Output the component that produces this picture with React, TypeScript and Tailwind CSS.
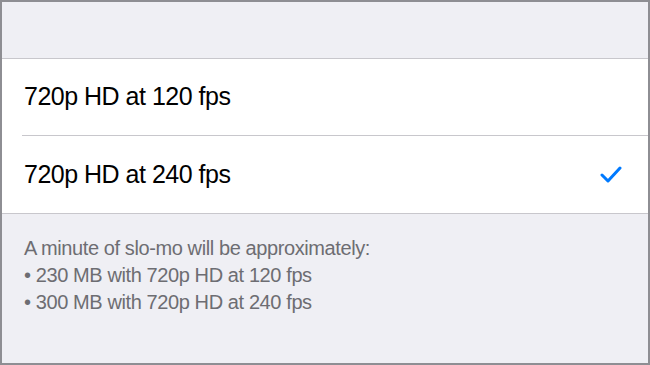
import React from 'react';

export default function App() {
  const options = [
    { label: '720p HD at 120 fps', selected: false },
    { label: '720p HD at 240 fps', selected: true },
  ];

  return (
    <div className="w-[650px] h-[365px] border-2 border-[#8e8e93] bg-[#efeff4] flex flex-col font-['Liberation_Sans',Arial,sans-serif] overflow-hidden">
      {/* Top spacer */}
      <div className="h-[56px] shrink-0"></div>

      {/* Options list */}
      <div className="bg-white border-y border-[#c8c7cc] flex flex-col">
        {options.map((opt, idx) => (
          <div key={idx} className="flex flex-col">
            {idx > 0 && <div className="ml-[20px] h-px bg-[#c8c7cc]"></div>}
            <div
              className={`${idx === 0 ? 'h-[76px]' : 'h-[77px]'} pl-[22px] pr-[26px] flex items-center justify-between`}
            >
              <span className="text-[25px] text-black tracking-[-0.5px]">{opt.label}</span>
              {opt.selected && (
                <svg width="22" height="17" viewBox="0 0 22 17" fill="none">
                  <polyline
                    points="2,9 8,15 20,2"
                    stroke="#007aff"
                    strokeWidth="3"
                    strokeLinecap="round"
                    strokeLinejoin="round"
                  />
                </svg>
              )}
            </div>
          </div>
        ))}
      </div>

      {/* Footer note */}
      <div className="pt-[21px] pl-[22px] text-[20px] leading-[27px] tracking-[-0.4px] text-[#6d6d72]">
        <p>A minute of slo-mo will be approximately:</p>
        <p>• 230 MB with 720p HD at 120 fps</p>
        <p>• 300 MB with 720p HD at 240 fps</p>
      </div>
    </div>
  );
}
